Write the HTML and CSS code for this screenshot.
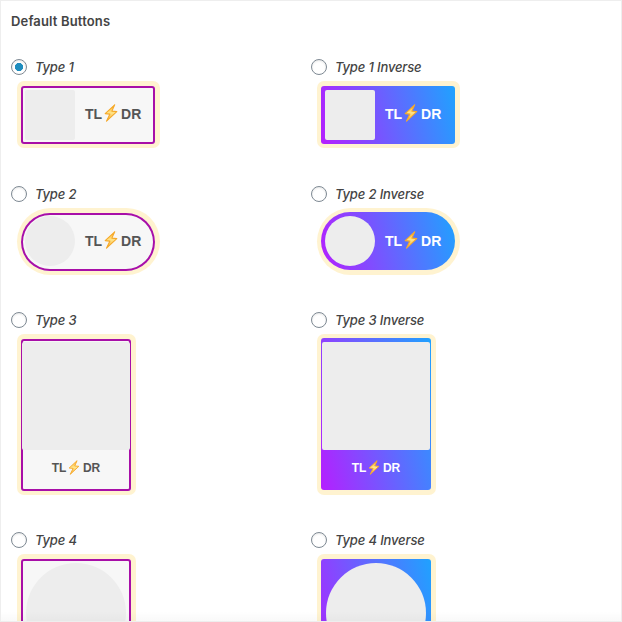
FILE: index.html
```html
<!DOCTYPE html>
<html lang="en">
<head>
<meta charset="utf-8">
<title>Default Buttons</title>
<link rel="stylesheet" href="styles.css">
</head>
<body>
<svg width="0" height="0" class="defs" aria-hidden="true">
  <defs>
    <linearGradient id="gold" x1="0" y1="0" x2="0" y2="1"><stop offset="0" stop-color="#ffb12c"/><stop offset=".5" stop-color="#ffe58a"/><stop offset="1" stop-color="#f9a92c"/></linearGradient>
    <symbol id="bolt" viewBox="0 0 14 18"><path d="M10.7.8 1.2 9.6l4.7.5-3.4 7.1 10.3-9.6-4.9-.5z" fill="url(#gold)" stroke="#f5a92b" stroke-width="1.1" stroke-linejoin="round"/></symbol>
  </defs>
</svg>
<main class="panel">
  <h1>Default Buttons</h1>
  <div class="grid">
    <section class="option"><label><input type="radio" name="type" checked><span>Type 1</span></label>
      <div class="halo wide"><div class="btn outline"><i class="thumb"></i><b class="brand">TL<svg><use href="#bolt"/></svg>DR</b></div></div></section>
    <section class="option"><label><input type="radio" name="type"><span>Type 1 Inverse</span></label>
      <div class="halo wide"><div class="btn inverse"><i class="thumb"></i><b class="brand">TL<svg><use href="#bolt"/></svg>DR</b></div></div></section>

    <section class="option"><label><input type="radio" name="type"><span>Type 2</span></label>
      <div class="halo wide pill low"><div class="btn outline"><i class="thumb"></i><b class="brand">TL<svg><use href="#bolt"/></svg>DR</b></div></div></section>
    <section class="option"><label><input type="radio" name="type"><span>Type 2 Inverse</span></label>
      <div class="halo wide pill"><div class="btn inverse"><i class="thumb"></i><b class="brand">TL<svg><use href="#bolt"/></svg>DR</b></div></div></section>

    <section class="option"><label><input type="radio" name="type"><span>Type 3</span></label>
      <div class="halo tall low"><div class="btn outline"><i class="thumb"></i><b class="brand">TL<svg><use href="#bolt"/></svg>DR</b></div></div></section>
    <section class="option"><label><input type="radio" name="type"><span>Type 3 Inverse</span></label>
      <div class="halo tall"><div class="btn inverse"><i class="thumb"></i><b class="brand">TL<svg><use href="#bolt"/></svg>DR</b></div></div></section>

    <section class="option"><label><input type="radio" name="type"><span>Type 4</span></label>
      <div class="halo tall round"><div class="btn outline"><i class="thumb"></i></div></div></section>
    <section class="option"><label><input type="radio" name="type"><span>Type 4 Inverse</span></label>
      <div class="halo tall round"><div class="btn inverse"><i class="thumb"></i></div></div></section>
  </div>
  <div class="fade"></div>
</main>
</body>
</html>
```
FILE: styles.css
```css
* { box-sizing: border-box; }
body { margin: 0; background: #fff; color: #444; font-family: Inter, "Liberation Sans", sans-serif; }
.defs { position: absolute; }
.panel { position: relative; height: 622px; overflow: hidden; border: 1px solid #eee; padding: 10px; }
h1 { margin: 0; font-size: 13px; line-height: 20px; font-weight: 600; letter-spacing: .15px; }
.grid { display: grid; grid-template-columns: 300px 300px; grid-template-rows: 127px 126px 220px 220px; margin-top: 25px; }
label { display: flex; align-items: center; gap: 8px; height: 22px; font-size: 13px; font-style: italic; font-weight: 500; letter-spacing: -.15px; }
input { appearance: none; flex: none; width: 16px; height: 16px; margin: 0; border: 1px solid #7e8993; border-radius: 50%; background: #fff; box-shadow: inset 0 1px 2px rgba(0,0,0,.1); }
input:checked { background: radial-gradient(circle, #1e8cbe 3.8px, #fff 4.4px); }
.halo { margin: 3px 0 0 6px; padding: 5px 5px 4px 4px; border-radius: 7px; background: #fff3d0; }
.wide { width: 143px; height: 67px; }
.tall { width: 119px; height: 161px; padding-top: 4px; }
.pill { padding-top: 4px; border-radius: 34px; }
.pill.low, .tall.low { padding-top: 5px; }
.btn { display: flex; border-radius: 3px; }
.wide .btn { width: 134px; height: 58px; padding: 4px; align-items: center; }
.tall .btn { width: 110px; height: 152px; flex-direction: column; align-items: center; padding-top: 4px; }
.pill .btn { border-radius: 29px; }
.outline { background: #f7f7f7; color: #555; box-shadow: inset 0 0 0 2px #a80fa8; }
.inverse { background: linear-gradient(76deg, #b51fff, #1fa2ff); color: #fff; }
.thumb { flex: none; width: 50px; height: 50px; border-radius: 2px; background: #ededed; }
.pill .thumb { border-radius: 50%; }
.pill.low .thumb { margin-top: -2px; }
.tall .thumb { width: 108px; height: 108px; }
.tall.low .btn { padding-top: 3px; }
.tall.round { padding-top: 5px; }
.round .thumb { width: 100px; height: 100px; border-radius: 50%; }
.brand { display: flex; align-items: center; margin: -2px 0 0 10px; font-family: "Liberation Sans", sans-serif; font-size: 14px; font-weight: 700; line-height: 18px; }
.pill .brand { margin-top: 0; }
.pill.low .brand { margin-top: -2px; }
.brand svg { width: 14px; height: 18px; margin: -2px 3px 0 2px; }
.tall .brand { margin: 9px 0 0; font-size: 12px; }
.tall .brand svg { width: 12px; height: 15px; margin: -2px 2.5px 0 2px; }
.fade { position: absolute; left: 0; right: 0; bottom: 0; height: 10px; background: linear-gradient(rgba(0,0,0,0), rgba(0,0,0,.025)); }
```
